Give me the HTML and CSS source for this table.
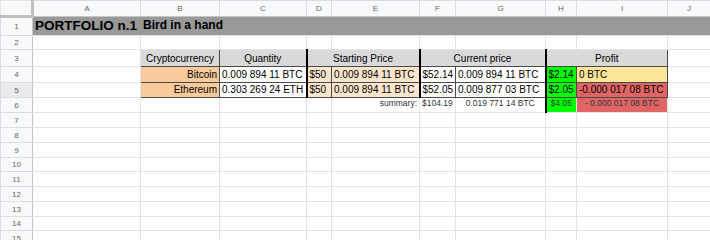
FILE: index.html
```html
<!DOCTYPE html>
<html>
<head>
<meta charset="utf-8">
<link rel="stylesheet" href="styles.css">
</head>
<body>
<table class="sheet">
  <colgroup>
    <col class="w-rh"><col class="w-a"><col class="w-b"><col class="w-c"><col class="w-d"><col class="w-e"><col class="w-f"><col class="w-g"><col class="w-h"><col class="w-i"><col class="w-j">
  </colgroup>
  <tr class="hrow">
    <td class="corner"></td><td class="ch">A</td><td class="ch">B</td><td class="ch">C</td><td class="ch">D</td><td class="ch">E</td><td class="ch">F</td><td class="ch">G</td><td class="ch">H</td><td class="ch">I</td><td class="ch">J</td>
  </tr>
  <tr class="r1">
    <td class="rh">1</td>
    <td class="title"><span class="t-main">PORTFOLIO n.1</span></td>
    <td class="title" colspan="9"><span class="t-sub">Bird in a hand</span></td>
  </tr>
  <tr class="r2">
    <td class="rh">2</td><td></td><td></td><td></td><td></td><td></td><td></td><td></td><td></td><td></td><td></td>
  </tr>
  <tr class="r3">
    <td class="rh">3</td><td></td>
    <td class="th">Cryptocurrency</td>
    <td class="th">Quantity</td>
    <td class="th thick" colspan="2">Starting Price</td>
    <td class="th thick" colspan="2">Current price</td>
    <td class="th thick" colspan="2">Profit</td>
    <td></td>
  </tr>
  <tr class="r4">
    <td class="rh">4</td><td></td>
    <td class="tb orange right">Bitcoin</td>
    <td class="tb">0.009 894 11 BTC</td>
    <td class="tb peach thick">$50</td>
    <td class="tb peach">0.009 894 11 BTC</td>
    <td class="tb thick">$52.14</td>
    <td class="tb">0.009 894 11 BTC</td>
    <td class="tb green thick">$2.14</td>
    <td class="tb yellow">0 BTC</td>
    <td></td>
  </tr>
  <tr class="r5">
    <td class="rh sel">5</td><td></td>
    <td class="tb orange right">Ethereum</td>
    <td class="tb">0.303 269 24 ETH</td>
    <td class="tb peach thick">$50</td>
    <td class="tb peach">0.009 894 11 BTC</td>
    <td class="tb thick">$52.05</td>
    <td class="tb">0.009 877 03 BTC</td>
    <td class="tb green thick">$2.05</td>
    <td class="tb red">-0.000 017 08 BTC</td>
    <td></td>
  </tr>
  <tr class="r6">
    <td class="rh">6</td><td></td><td></td><td></td><td></td>
    <td class="sm right">summary:</td>
    <td class="sm">$104.19</td>
    <td class="sm center">0.019 771 14 BTC</td>
    <td class="sm green thick center">$4.05</td>
    <td class="sm red center">- 0.000 017 08 BTC</td>
    <td></td>
  </tr>
  <tr class="rn"><td class="rh">7</td><td></td><td></td><td></td><td></td><td></td><td></td><td></td><td></td><td></td><td></td></tr>
  <tr class="rn"><td class="rh">8</td><td></td><td></td><td></td><td></td><td></td><td></td><td></td><td></td><td></td><td></td></tr>
  <tr class="rn"><td class="rh">9</td><td></td><td></td><td></td><td></td><td></td><td></td><td></td><td></td><td></td><td></td></tr>
  <tr class="rs"><td class="rh">10</td><td></td><td></td><td></td><td></td><td></td><td></td><td></td><td></td><td></td><td></td></tr>
  <tr class="rn"><td class="rh">11</td><td></td><td></td><td></td><td></td><td></td><td></td><td></td><td></td><td></td><td></td></tr>
  <tr class="rn"><td class="rh">12</td><td></td><td></td><td></td><td></td><td></td><td></td><td></td><td></td><td></td><td></td></tr>
  <tr class="rn"><td class="rh">13</td><td></td><td></td><td></td><td></td><td></td><td></td><td></td><td></td><td></td><td></td></tr>
  <tr class="rs"><td class="rh">14</td><td></td><td></td><td></td><td></td><td></td><td></td><td></td><td></td><td></td><td></td></tr>
  <tr class="rn"><td class="rh">15</td><td></td><td></td><td></td><td></td><td></td><td></td><td></td><td></td><td></td><td></td></tr>
</table>
</body>
</html>
```
FILE: styles.css
```css
html, body {
  margin: 0;
  padding: 0;
  background: #ffffff;
  overflow: hidden;
}
body {
  font-family: "Liberation Sans", Arial, sans-serif;
  font-size: 10px;
  color: #000;
}
.sheet {
  border-collapse: collapse;
  table-layout: fixed;
  width: 710px;
}
.w-rh { width: 32px; }
.w-a { width: 108px; }
.w-b { width: 79px; }
.w-c { width: 87px; }
.w-d { width: 25px; }
.w-e { width: 88px; }
.w-f { width: 36px; }
.w-g { width: 90px; }
.w-h { width: 31px; }
.w-i { width: 91px; }
.w-j { width: 43px; }

.sheet td {
  border: 1px solid #e2e3e3;
  padding: 0 2px 2px 2px;
  vertical-align: bottom;
  white-space: nowrap;
  overflow: visible;
  line-height: 11px;
}
.hrow { height: 16px; }
.r1 { height: 19px; }
.r2 { height: 14px; }
.r3 { height: 17px; }
.r4 { height: 16px; }
.r5 { height: 15px; }
.r6 { height: 15px; }
.rn { height: 15px; }
.rs { height: 14px; }

.sheet td.corner {
  background: #f8f9fa;
  border-right: 3px solid #c0c0c0;
  border-bottom: 3px solid #c0c0c0;
}
.sheet td.ch {
  background: #f8f9fa;
  color: #666;
  font-size: 8px;
  text-align: center;
  vertical-align: middle;
  padding: 0;
  border-color: #dadce0;
  border-bottom-color: #c4c7c5;
}
.sheet td.rh {
  background: #f8f9fa;
  color: #666;
  font-size: 8px;
  text-align: center;
  vertical-align: middle;
  padding: 0;
  border-color: #dadce0;
  border-right-color: #c4c7c5;
}
.sheet td.rh.sel { background: #e8eaed; }

.sheet td.title {
  background: #999999;
  border-left-color: #999999;
  border-right-color: #999999;
  vertical-align: middle;
  padding: 0 2px 1px 2px;
  overflow: visible;
}
.t-main {
  font-weight: bold;
  font-size: 13.5px;
}
.t-sub {
  font-weight: bold;
  font-size: 12px;
}

.sheet td.th {
  background: #d9d9d9;
  border: 1px solid #4a4a4a;
  text-align: center;
}
.sheet td.tb {
  border: 1px solid #4a4a4a;
}
.sheet td.thick { border-left: 2px solid #000; }

.right { text-align: right; }
.center { text-align: center; }

.sheet td.orange { background: #f9cb9c; }
.sheet td.peach { background: #fce5cd; }
.sheet td.green { background: #00ff00; }
.sheet td.yellow { background: #ffe599; }
.sheet td.red { background: #e06666; }

.sheet td.sm {
  font-size: 8.5px;
  color: #333;
  padding-bottom: 3px;
}
```
